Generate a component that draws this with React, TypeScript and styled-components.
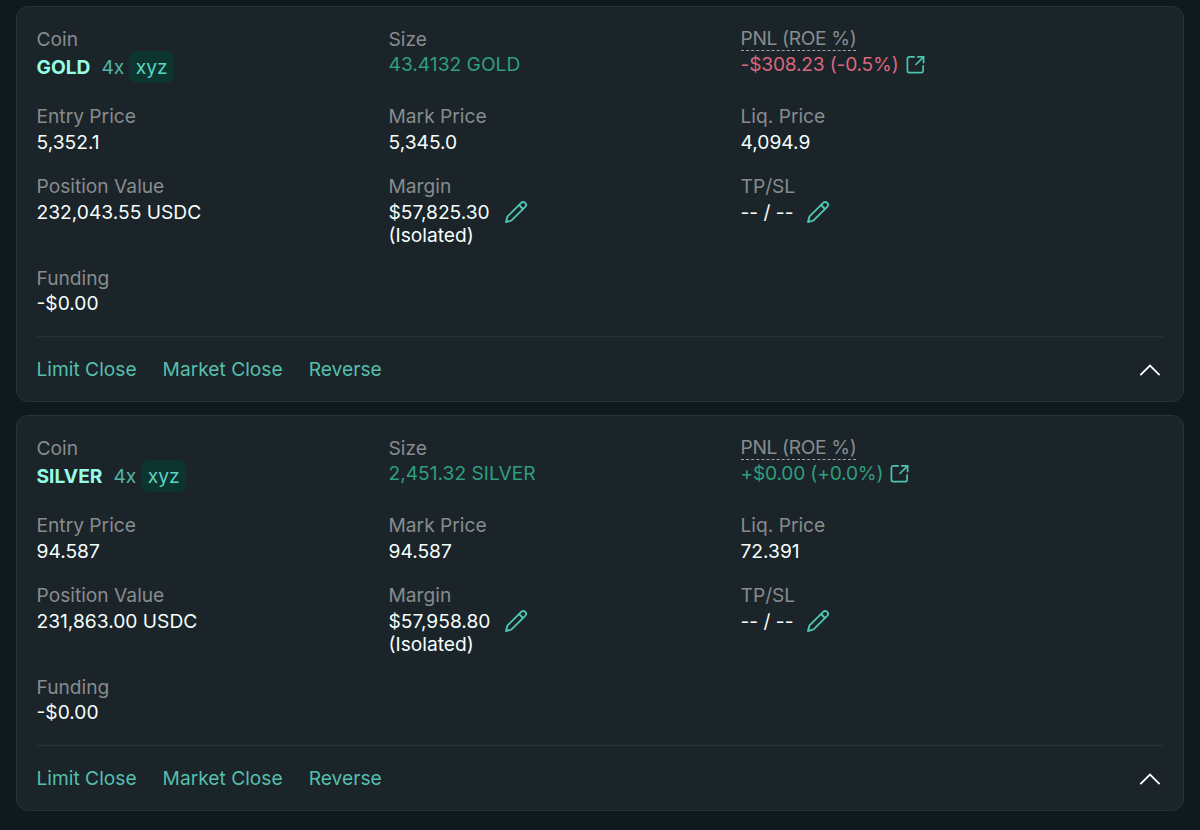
import React from "react";
import styled, { createGlobalStyle } from "styled-components";

const GlobalStyle = createGlobalStyle`
  html, body {
    margin: 0;
    padding: 0;
    background: #0f1a1f;
  }
  body {
    font-family: Inter, "Noto Sans", sans-serif;
  }
`;

type Position = {
  coin: string;
  size: string;
  pnl: string;
  loss?: boolean;
  entry: string;
  mark: string;
  liq: string;
  value: string;
  margin: string;
};

const positions: Position[] = [
  {
    coin: "GOLD",
    size: "43.4132 GOLD",
    pnl: "-$308.23 (-0.5%)",
    loss: true,
    entry: "5,352.1",
    mark: "5,345.0",
    liq: "4,094.9",
    value: "232,043.55 USDC",
    margin: "$57,825.30",
  },
  {
    coin: "SILVER",
    size: "2,451.32 SILVER",
    pnl: "+$0.00 (+0.0%)",
    entry: "94.587",
    mark: "94.587",
    liq: "72.391",
    value: "231,863.00 USDC",
    margin: "$57,958.80",
  },
];

const PencilIcon = () => (
  <PencilSvg viewBox="0 0 24 24" fill="none" stroke="currentColor" strokeWidth="1.9" strokeLinecap="round" strokeLinejoin="round">
    <path d="M21.2 6.8a2.8 2.8 0 0 0-4-4L3.8 16.2a2 2 0 0 0-.5.8l-1.3 5 5-1.3a2 2 0 0 0 .8-.5z" />
    <path d="m15 5 4 4" />
  </PencilSvg>
);

const ExternalIcon = () => (
  <ExternalSvg viewBox="0 0 20 20" fill="none" stroke="currentColor" strokeWidth="1.8" strokeLinecap="round" strokeLinejoin="round">
    <path d="M8.5 2H3.5a2 2 0 0 0-2 2v12.5a2 2 0 0 0 2 2H16a2 2 0 0 0 2-2V11.5" />
    <path d="M12.5 2h6v6" />
    <path d="M18.5 2l-8 8" />
  </ExternalSvg>
);

const PositionCard: React.FC<{ item: Position }> = ({ item }) => (
  <Card>
    <Grid>
      <Cell>
        <Label>Coin</Label>
        <CoinRow>
          <CoinName>{item.coin}</CoinName>
          <Leverage>4x</Leverage>
          <Dex>xyz</Dex>
        </CoinRow>
      </Cell>
      <Cell>
        <TightLabel>Size</TightLabel>
        <Value $tone="profit">{item.size}</Value>
      </Cell>
      <Cell>
        <PnlLabel>PNL (ROE %)</PnlLabel>
        <PnlRow>
          <PnlValue $tone={item.loss ? "loss" : "profit"}>{item.pnl}</PnlValue>
          <ExternalIcon />
        </PnlRow>
      </Cell>

      <Cell>
        <Label>Entry Price</Label>
        <Value>{item.entry}</Value>
      </Cell>
      <Cell>
        <Label>Mark Price</Label>
        <Value>{item.mark}</Value>
      </Cell>
      <Cell>
        <Label>Liq. Price</Label>
        <Value>{item.liq}</Value>
      </Cell>

      <Cell>
        <Label>Position Value</Label>
        <Value>{item.value}</Value>
      </Cell>
      <Cell>
        <Label>Margin</Label>
        <EditRow $gap={14}>
          <Value>{item.margin}</Value>
          <PencilIcon />
        </EditRow>
        <Value>(Isolated)</Value>
      </Cell>
      <Cell>
        <Label>TP/SL</Label>
        <EditRow $gap={12}>
          <Value>-- / --</Value>
          <PencilIcon />
        </EditRow>
      </Cell>

      <Cell>
        <TightLabel>Funding</TightLabel>
        <Value>-$0.00</Value>
      </Cell>
    </Grid>
    <Footer>
      <Actions>
        <Action>Limit Close</Action>
        <Action>Market Close</Action>
        <Action>Reverse</Action>
      </Actions>
      <Chevron viewBox="0 0 22 14" fill="none" stroke="currentColor" strokeWidth="1.8" strokeLinecap="square">
        <path d="M2 12.5l9-9 9 9" />
      </Chevron>
    </Footer>
  </Card>
);

const App: React.FC = () => (
  <Page>
    <GlobalStyle />
    {positions.map((item) => (
      <PositionCard key={item.coin} item={item} />
    ))}
  </Page>
);

export default App;

const Page = styled.div`
  width: 1200px;
  height: 830px;
  box-sizing: border-box;
  padding: 6px 16px 0;
  display: flex;
  flex-direction: column;
  gap: 13px;
  overflow: hidden;
  background: #0f1a1f;
`;
const Card = styled.div`
  height: 396px;
  box-sizing: border-box;
  padding: 20px 20px 0 19.5px;
  display: flex;
  flex-direction: column;
  background: #1b2429;
  border: 1px solid #283238;
  border-radius: 12px;
`;
const Grid = styled.div`
  display: grid;
  grid-template-columns: repeat(3, 352px);
  row-gap: 19.5px;
  align-items: start;
`;
const Cell = styled.div`
  display: flex;
  flex-direction: column;
  align-items: flex-start;
`;
const Label = styled.span`
  font-size: 19.2px;
  line-height: 24px;
  margin-bottom: 3px;
  color: #878c8f;
`;
const TightLabel = styled(Label)`
  margin-bottom: 2px;
`;
const PnlLabel = styled(Label)`
  line-height: 23px;
  margin-bottom: 1.5px;
  letter-spacing: -0.35px;
  border-bottom: 1px dashed #a0a5a8;
`;
const Value = styled.span<{ $tone?: "profit" | "loss" }>`
  font-size: 19.2px;
  line-height: 23px;
  white-space: nowrap;
  color: ${(p) =>
    p.$tone === "profit" ? "#2f9e7f" : p.$tone === "loss" ? "#d9677f" : "#f6fefd"};
`;
const PnlValue = styled(Value)`
  letter-spacing: -0.2px;
`;
const CoinRow = styled.div`
  display: flex;
  align-items: center;
  height: 32px;
  margin: -3px 0 1.5px;
`;
const CoinName = styled.span`
  font-size: 19.2px;
  font-weight: 700;
  color: #97fce4;
  margin-right: 11px;
`;
const Leverage = styled.span`
  font-size: 19.2px;
  color: #50b5a6;
  margin-right: 5px;
`;
const Dex = styled.span`
  font-size: 19.2px;
  line-height: 32px;
  padding: 0 6.5px;
  color: #5fd4c2;
  background: #0d3530;
  border-radius: 7px;
`;
const PnlRow = styled.div`
  display: flex;
  align-items: center;
  gap: 7px;
`;
const EditRow = styled.div<{ $gap: number }>`
  display: flex;
  align-items: center;
  gap: ${(p) => p.$gap}px;
`;
const PencilSvg = styled.svg`
  width: 24px;
  height: 24px;
  margin: -1px 0;
  color: #4cc4b0;
`;
const ExternalSvg = styled.svg`
  width: 19px;
  height: 19px;
  color: #4cc4b0;
`;
const Footer = styled.div`
  margin-top: 21px;
  height: 65px;
  border-top: 1px solid #283238;
  display: flex;
  align-items: center;
  justify-content: space-between;
`;
const Actions = styled.div`
  display: flex;
  gap: 26px;
`;
const Action = styled.span`
  font-size: 19.2px;
  color: #55bfae;
`;
const Chevron = styled.svg`
  width: 22px;
  height: 14px;
  margin-right: 2px;
  color: #f6fefd;
`;
